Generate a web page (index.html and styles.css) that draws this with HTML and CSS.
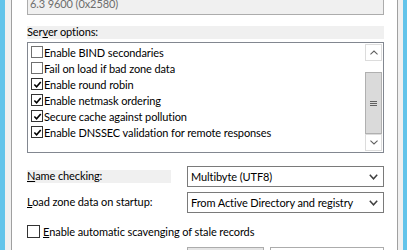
FILE: index.html
```html
<!DOCTYPE html>
<html lang="en">
<head>
    <meta charset="utf-8">
    <link rel="stylesheet" href="styles.css">
</head>
<body>
    <div class="window">
        <div class="page">
            <div class="version">6.3 9600 (0x2580)</div>

            <div class="group-label">Ser<u>v</u>er options:</div>
            <div class="options">
                <div class="option-list">
                    <div class="option"><span class="box"></span>Enable BIND secondaries</div>
                    <div class="option"><span class="box"></span>Fail on load if bad zone data</div>
                    <div class="option"><span class="box checked"><svg viewBox="0 0 10 10"><path d="M1.5 5 L4 7.6 L8.6 2.2"/></svg></span>Enable round robin</div>
                    <div class="option"><span class="box checked"><svg viewBox="0 0 10 10"><path d="M1.5 5 L4 7.6 L8.6 2.2"/></svg></span>Enable netmask ordering</div>
                    <div class="option"><span class="box checked"><svg viewBox="0 0 10 10"><path d="M1.5 5 L4 7.6 L8.6 2.2"/></svg></span>Secure cache against pollution</div>
                    <div class="option"><span class="box checked"><svg viewBox="0 0 10 10"><path d="M1.5 5 L4 7.6 L8.6 2.2"/></svg></span>Enable DNSSEC validation for remote responses</div>
                </div>
                <div class="scrollbar">
                    <div class="scroll-btn"><svg viewBox="0 0 9 5"><path d="M0.5 4.5 L4.5 0.8 L8.5 4.5"/></svg></div>
                    <div class="track">
                        <div class="thumb"><span></span><span></span><span></span></div>
                    </div>
                    <div class="scroll-btn"><svg viewBox="0 0 9 5"><path d="M0.5 0.5 L4.5 4.2 L8.5 0.5"/></svg></div>
                </div>
            </div>

            <div class="field">
                <div class="field-label shaded"><u>N</u>ame checking:</div>
                <div class="combo">Multibyte (UTF8)<svg viewBox="0 0 9 6"><path d="M0.8 0.8 L4.5 4.8 L8.2 0.8"/></svg></div>
            </div>
            <div class="field second">
                <div class="field-label"><u>L</u>oad zone data on startup:</div>
                <div class="combo">From Active Directory and registry<svg viewBox="0 0 9 6"><path d="M0.8 0.8 L4.5 4.8 L8.2 0.8"/></svg></div>
            </div>

            <div class="scavenge"><span class="box large"></span><u>E</u>nable automatic scavenging of stale records</div>

            <div class="bottom-row">
                <div class="stub small"></div>
                <div class="stub wide"></div>
            </div>
        </div>
    </div>
</body>
</html>
```

FILE: styles.css
```css
html, body {
    margin: 0;
    padding: 0;
}

body {
    width: 407px;
    height: 250px;
    overflow: hidden;
    background-color: #f0f0f0;
    font-family: "Segoe UI", Lato, "Noto Sans", sans-serif;
    font-size: 11px;
    letter-spacing: -0.1px;
    color: #000000;
}

/* Window frame */
.window {
    display: flex;
    height: 250px;
    border-left: 5px solid #63c4ea;
    border-right: 4px solid #63c4ea;
    padding: 0 5px 0 6px;
}

/* Tab page */
.page {
    flex: 1;
    background-color: #ffffff;
    border-left: 1px solid #a0a0a0;
    border-right: 1px solid #a0a0a0;
    padding: 0 13px 0 15px;
}

/* Read only version box */
.version {
    margin-top: -7px;
    height: 22px;
    box-sizing: border-box;
    border: 1px solid #acacac;
    background-color: #f0f0f0;
    color: #6d6d6d;
    padding-left: 2px;
    line-height: 20px;
    white-space: nowrap;
}

.group-label {
    margin-top: 11px;
    height: 13px;
    line-height: 12px;
    background-color: #f0f0f0;
}

/* Options list */
.options {
    margin-top: 3px;
    height: 111px;
    box-sizing: border-box;
    border: 1px solid #828790;
    padding: 1px;
    display: flex;
}

.option-list {
    flex: 1;
}

.option {
    height: 16px;
    line-height: 15px;
    display: flex;
    align-items: center;
    padding-left: 2px;
    white-space: nowrap;
}

.box {
    width: 12px;
    height: 12px;
    flex: none;
    box-sizing: border-box;
    border: 1px solid #707070;
    background-color: #ffffff;
    margin-right: 1px;
    display: flex;
    align-items: center;
    justify-content: center;
}

.box.checked {
    border-color: #333333;
}

.box svg {
    width: 9px;
    height: 9px;
}

.box path {
    fill: none;
    stroke: #000000;
    stroke-width: 1.8;
}

.box.large {
    width: 13px;
    height: 13px;
    border-color: #333333;
    margin-right: 3px;
}

/* Scrollbar */
.scrollbar {
    width: 17px;
    display: flex;
    flex-direction: column;
}

.scroll-btn {
    height: 17px;
    box-sizing: border-box;
    border: 1px solid #dcdcdc;
    display: flex;
    align-items: center;
    justify-content: center;
}

.scroll-btn svg {
    width: 8px;
    height: 5px;
}

.scroll-btn path {
    fill: none;
    stroke: #606060;
    stroke-width: 1.2;
}

.track {
    flex: 1;
    padding-top: 11px;
}

.thumb {
    height: 62px;
    box-sizing: border-box;
    border: 1px solid #b0b0b0;
    background-color: #dadada;
    display: flex;
    flex-direction: column;
    align-items: center;
    justify-content: center;
    gap: 1px;
}

.thumb span {
    width: 7px;
    height: 1px;
    background-color: #606060;
}

/* Dropdown rows */
.field {
    margin-top: 13px;
    display: flex;
    align-items: center;
}

.field.second {
    margin-top: 5px;
}

.field-label {
    width: 144px;
    height: 13px;
    line-height: 12px;
    margin-right: 16px;
    white-space: nowrap;
}

.field-label.shaded {
    background-color: #f0f0f0;
}

.combo {
    flex: 1;
    height: 21px;
    box-sizing: border-box;
    border: 1px solid #7a7a7a;
    background-color: #ffffff;
    padding: 0 5px 0 3px;
    display: flex;
    align-items: center;
    justify-content: space-between;
    white-space: nowrap;
}

.combo svg {
    width: 9px;
    height: 6px;
}

.combo path {
    fill: none;
    stroke: #404040;
    stroke-width: 1.5;
}

/* Scavenging */
.scavenge {
    margin-top: 12px;
    display: flex;
    align-items: center;
    height: 13px;
    white-space: nowrap;
}

/* Partly visible controls below */
.bottom-row {
    margin-top: 9px;
    display: flex;
    justify-content: flex-end;
    gap: 6px;
}

.stub {
    height: 12px;
    box-sizing: border-box;
    border: 1px solid #acacac;
    background-color: #e5e5e5;
}

.stub.small {
    width: 77px;
}

.stub.wide {
    width: 114px;
    background-color: #ffffff;
}
```
